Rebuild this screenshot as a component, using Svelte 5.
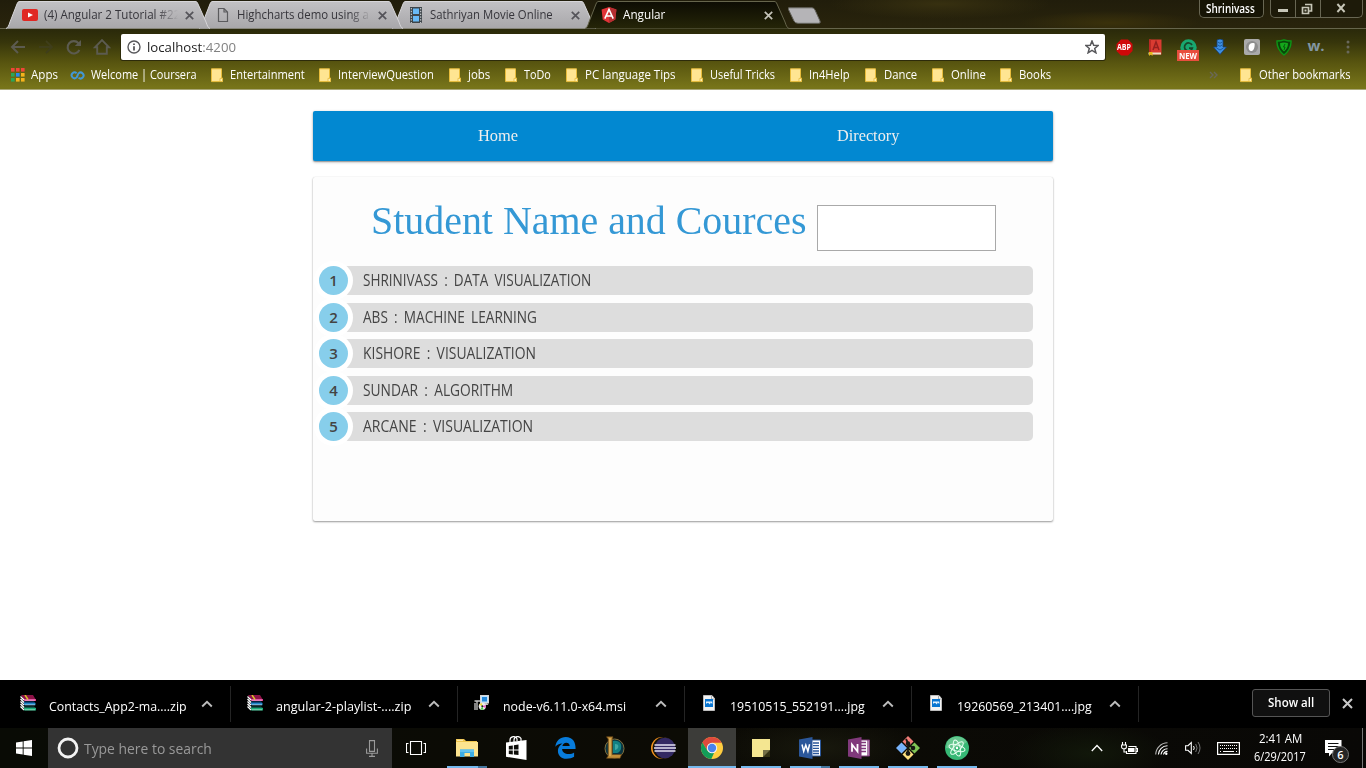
<script>
  const tabs = [
    { icon: 'youtube', title: '(4) Angular 2 Tutorial #22', width: 136, fade: true },
    { icon: 'page', title: 'Highcharts demo using a', width: 132, fade: true },
    { icon: 'film', title: 'Sathriyan Movie Online', width: 123 },
    { icon: 'angular', title: 'Angular', width: 42, active: true }
  ];

  const bookmarks = [
    { title: 'Entertainment', width: 75, cell: 108 },
    { title: 'InterviewQuestion', width: 96, cell: 130 },
    { title: 'jobs', width: 22, cell: 56 },
    { title: 'ToDo', width: 27, cell: 61 },
    { title: 'PC language Tips', width: 91, cell: 125 },
    { title: 'Useful Tricks', width: 65, cell: 99 },
    { title: 'In4Help', width: 41, cell: 75 },
    { title: 'Dance', width: 33, cell: 67 },
    { title: 'Online', width: 35, cell: 68 },
    { title: 'Books', width: 32, cell: 52 }
  ];

  const students = [
    { text: 'Shrinivass : Data Visualization', width: 228 },
    { text: 'Abs : Machine Learning', width: 174 },
    { text: 'Kishore : Visualization', width: 173 },
    { text: 'Sundar : Algorithm', width: 150 },
    { text: 'Arcane : Visualization', width: 170 }
  ];

  const downloads = [
    { icon: 'rar', name: 'Contacts_App2-ma....zip', width: 138 },
    { icon: 'rar', name: 'angular-2-playlist-....zip', width: 135 },
    { icon: 'msi', name: 'node-v6.11.0-x64.msi', width: 123 },
    { icon: 'jpg', name: '19510515_552191....jpg', width: 135 },
    { icon: 'jpg', name: '19260569_213401....jpg', width: 135 }
  ];

  const apps = [
    { icon: 'explorer', open: true, stacked: true },
    { icon: 'store' },
    { icon: 'edge' },
    { icon: 'league' },
    { icon: 'eclipse' },
    { icon: 'chrome', focused: true },
    { icon: 'notes', open: true },
    { icon: 'word', open: true, stacked: true },
    { icon: 'onenote', open: true },
    { icon: 'git', open: true },
    { icon: 'atom', open: true }
  ];

  // Condenses a run of text so that it fills exactly the given width.
  function fit(node, width) {
    const natural = node.offsetWidth;
    if (natural) node.style.transform = `scaleX(${width / natural})`;
  }
</script>

{#snippet label(text, width)}
  <span class="label" style="width:{width}px"><span class="run" use:fit={width}>{text}</span></span>
{/snippet}

{#snippet folder()}
  <svg class="folder" width="13" height="15" viewBox="0 0 13 15">
    <path d="M.5 .8H10.5V10H11.5V13.6H.5Z" fill="#ffe592" stroke="#e9bd3c" />
    <path d="M9 13.5V10.4H11.5V13.5Z" fill="#fff0b0" stroke="#e5b93a" stroke-width=".8" />
  </svg>
{/snippet}

{#snippet icon(name)}
  {#if name === 'youtube'}
    <svg width="16" height="16" viewBox="0 0 16 16"><rect x="0" y="2" width="16" height="12" rx="2" fill="#e02823" /><path d="M6 5.4L11 8L6 10.6Z" fill="#fff" /></svg>
  {:else if name === 'page'}
    <svg width="16" height="16" viewBox="0 0 16 16"><path d="M3.5 1.5H9L12.5 5V14.5H3.5ZM9 1.5V5H12.5" fill="none" stroke="#5b5b5e" stroke-width="1.2" /></svg>
  {:else if name === 'film'}
    <svg width="16" height="16" viewBox="0 0 16 16"><rect x="2" y="0" width="12" height="16" fill="#3f464b" /><path d="M5 1.5H11V7H5ZM5 9H11V14.5H5Z" fill="#69b9f5" /><path d="M3.3 1V16M12.7 1V16" stroke="#d8dde0" stroke-width="1" stroke-dasharray="1.4 1.4" /></svg>
  {:else if name === 'angular'}
    <svg width="16" height="16" viewBox="0 0 16 16"><path d="M8 0L15.4 2.6L14.3 12.4L8 16L1.7 12.4L.6 2.6Z" fill="#e23237" /><path d="M8 0L15.4 2.6L14.3 12.4L8 16Z" fill="#b52e31" /><path d="M3.8 11.7L8 2.5L12.2 11.7M5.5 9H10.5" fill="none" stroke="#fff" stroke-width="1.6" /></svg>
  {:else if name === 'rar'}
    <svg width="16" height="17" viewBox="0 0 16 17">
      <path d="M1 0H13L16 5H4Z" fill="#8d1247" /><path d="M4 4H16V6H4Z" fill="#db3f93" />
      <path d="M2 6.5H14L15.5 8H3Z" fill="#0b497f" /><path d="M4 8H15.5V10.2H4Z" fill="#2186c8" />
      <path d="M2 11.5H14L16 13H3Z" fill="#0c594c" /><path d="M4 13H16V15.5H4Z" fill="#1cad78" />
      <path d="M.5 1.5L4 5M.5 4L4 7.5M.5 6.5L4 10M.5 9L4 12.5M.5 11.5L4 15" stroke="#fff" stroke-width="1.3" />
      <path d="M5 0L8 4.5" stroke="#d9c32a" stroke-width="1.5" /><path d="M5 5.2H15M5 9.8H15M5 14.8H15" stroke="#fff" stroke-width=".5" />
    </svg>
  {:else if name === 'msi'}
    <svg width="16" height="17" viewBox="0 0 16 17">
      <rect x="6.5" y=".5" width="8" height="7.5" fill="#bfe3ff" stroke="#d5d5d5" /><rect x="8" y="2" width="5" height="4.5" fill="#2489db" /><path d="M9 10H14.5L13 8H10Z" fill="#c2c2c2" />
      <path d="M.5 6H6M3 6V15M1 8V15" stroke="#c9c9c9" stroke-width="1.3" /><circle cx="8.3" cy="11.3" r="3.6" fill="#ececec" /><path d="M8.3 11.3L11.7 10V13Z" fill="#ea53c7" /><path d="M8.3 11.3L6.4 14.4L9.5 14.7Z" fill="#49d445" /><path d="M8.3 11.3L5 9.4L8 8Z" fill="#f2dd3b" /><circle cx="8.3" cy="11.3" r="1" fill="#222" />
    </svg>
  {:else if name === 'jpg'}
    <svg width="16" height="17" viewBox="0 0 16 17"><path d="M2.5 .5H11L13.5 3.5V15.5H2.5Z" fill="#f3f3f3" stroke="#bdbdbd" /><path d="M10.5 .5V4H13.5" fill="#fff" stroke="#aaa" /><rect x="4" y="4" width="8" height="8" fill="#0875d1" /><path d="M5 6.4H11.3V9L9.6 7.6L9 9.5L7 7.7L5 8.7Z" fill="#e9f5ff" /></svg>
  {:else if name === 'explorer'}
    <svg width="22" height="18" viewBox="0 0 22 18"><path d="M0 0H8L10 2H21V17H0Z" fill="#f0c64e" /><path d="M0 3H22V17.5H0Z" fill="#fde48f" /><path d="M1 1.3H7" stroke="#fff1bd" /><path d="M4 18V10.5H18V18H14V14H8.5V18Z" fill="#3eaee5" /><path d="M4 10.5H18V13H4Z" fill="#62c3ef" /></svg>
  {:else if name === 'store'}
    <svg width="24" height="24" viewBox="0 0 24 24"><path d="M2 6.5L22.5 4V24L2 20.8Z" fill="#fff" /><path d="M6 7V4C6 .2 12-.6 13 2.8V5M10 6V4C10 .2 15.5-.6 17 2.6V5" fill="none" stroke="#fff" stroke-width="1.2" /><path d="M4.8 10L8.8 9.5V13.4H4.8ZM9.9 9.3L14.5 8.6V13.4H9.9ZM4.8 14.5H8.8V18.4L4.8 17.9ZM9.9 14.5H14.5V19.1L9.9 18.5Z" fill="#0c0c08" /></svg>
  {:else if name === 'edge'}
    <svg width="21" height="22" viewBox="0 0 21 22"><path d="M.3 9.7C1.3 3.6 5.2 0 10.8 0C17.5 0 20.8 4.9 20.6 12H7.1C7.3 15.4 10 17 13.5 17C15.8 17 17.8 16.3 19.1 15.4V19.8C17.4 21 14.6 21.8 11.6 21.8C6 21.8 2.9 18.3 2.9 13.7C2.9 10.8 4.5 8 7.4 6.4C4 6.6 1.8 7.7.3 9.7ZM7.4 9H14.7C14.5 6.8 13.3 5.8 11.3 5.8C9.2 5.8 7.8 7.1 7.4 9Z" fill="#087cdb" fill-rule="evenodd" /></svg>
  {:else if name === 'league'}
    <svg width="22" height="24" viewBox="0 0 22 24"><circle cx="11.5" cy="12.5" r="9.5" fill="#0a3440" stroke="#81703f" /><path d="M10 5C17 4 19 8 18 13C16 18 13 17 10 17Z" fill="#138083" /><path d="M12 8C17 8 16 13 12 14" fill="#3fa8a4" /><path d="M3.5 .8H10L9.2 3V18.5H18.5L17 22.3H3.5L5.2 20V3Z" fill="#c28f3a" stroke="#654518" stroke-width=".7" /><path d="M7 2V20" stroke="#e9c36b" /></svg>
  {:else if name === 'eclipse'}
    <svg width="25" height="22" viewBox="0 0 25 22"><circle cx="11" cy="11" r="11" fill="#f7941e" /><circle cx="12.6" cy="11" r="11" fill="#17130c" /><circle cx="14" cy="11" r="10.3" fill="#332963" /><path d="M3.5 8H24.5M3 11H25M3.5 14H24.5" stroke="#e5e1f2" stroke-width="1.5" /></svg>
  {:else if name === 'chrome'}
    <svg width="22" height="22" viewBox="0 0 22 22"><circle cx="11" cy="11" r="11" fill="#ffcd40" /><path d="M11 11L6.5 13.7L1.4 5.6A11 11 0 0 1 20.6 5.8H11Z" fill="#df4a3d" /><path d="M1.4 5.6L6.5 13.7L11 16H13L10.3 22A11 11 0 0 1 1.4 5.6Z" fill="#129d59" /><circle cx="11" cy="11" r="5.2" fill="#f3f3f3" /><circle cx="11" cy="11" r="4.2" fill="#4a82ed" /></svg>
  {:else if name === 'notes'}
    <svg width="18" height="18" viewBox="0 0 18 18"><path d="M0 0H18V11L11 18H0Z" fill="#f4e691" /><path d="M11 18V11H18Z" fill="#746f46" /><path d="M18 11V18H11Z" fill="#333114" /></svg>
  {:else if name === 'word' || name === 'onenote'}
    <svg width="23" height="22" viewBox="0 0 23 22"><path d="M11 3H21.5V19H11Z" fill="#fff" stroke={name === 'word' ? '#2b579a' : '#80397b'} /><path d={name === 'word' ? 'M14 6H20M14 8.7H20M14 11.3H20M14 14H20M14 16.5H20' : 'M13 5.5H18M13 8.5H18M13 11.5H18M13 14.5H18M20 3V19'} stroke={name === 'word' ? '#2b579a' : '#80397b'} stroke-width="1.3" /><path d="M0 2.5L13.5 0V22L0 19.5Z" fill={name === 'word' ? '#2b579a' : '#80397b'} />{#if name === 'word'}<path d="M3 7.5L4.7 14.3L6.8 8L8.9 14.3L10.6 7.3" fill="none" stroke="#fff" stroke-width="1.5" />{:else}<path d="M4 14.7V7.5L9.5 14.5V7" fill="none" stroke="#fff" stroke-width="1.8" />{/if}</svg>
  {:else if name === 'git'}
    <svg width="24" height="24" viewBox="0 0 24 24"><path d="M12 0L17.5 5.5L12 11L6.5 5.5Z" fill="#f17d78" /><path d="M5.5 6.5L11 12L5.5 17.5L0 12Z" fill="#78b4fc" /><path d="M18.5 6.5L24 12L18.5 17.5L13 12Z" fill="#80c355" /><path d="M12 13L17.5 18.5L12 24L6.5 18.5Z" fill="#fce080" /><path d="M10 3L12 7V18M12 8L17 12" fill="none" stroke="#171712" stroke-width="1.8" /><circle cx="12" cy="7.5" r="2.2" fill="#171712" /><circle cx="12" cy="17.5" r="2.4" fill="#171712" /><circle cx="17" cy="12" r="2.3" fill="#171712" /></svg>
  {:else if name === 'atom'}
    <svg width="24" height="24" viewBox="0 0 24 24"><circle cx="12" cy="12" r="12" fill="#36b875" /><path d="M2 6A12 12 0 0 1 22 6Q12 14 1 12Z" fill="#66c78f" /><g fill="none" stroke="#e8fff1" stroke-width="1"><ellipse cx="12" cy="12" rx="8.3" ry="3.2" transform="rotate(15 12 12)" /><ellipse cx="12" cy="12" rx="8.3" ry="3.2" transform="rotate(75 12 12)" /><ellipse cx="12" cy="12" rx="8.3" ry="3.2" transform="rotate(135 12 12)" /></g><circle cx="12" cy="12" r="1.2" fill="#fff" /></svg>
  {/if}
{/snippet}

<div class="screen">
  <header class="chrome">
    <div class="strip">
      <div class="tabs">
        {#each tabs as tab, i}
          <div class="tab" class:active={tab.active} style="z-index:{tab.active ? 9 : 5 - i}">
            <svg class="shape" width="206" height="29" viewBox="0 0 206 29">
              <defs>
                <linearGradient id="tab{i}" x2="0" y2="1">
                  <stop offset="0" stop-color={tab.active ? '#0d0c03' : '#c2c1c4'} />
                  <stop offset="1" stop-color={tab.active ? '#252508' : '#a8a7aa'} />
                </linearGradient>
              </defs>
              <path d="M0 28.5C2 28 3 25 4 22L11 4C12 2 12 1.5 14 1.5H189C191 1.5 191 2 192 4L200 22C201 25 202 28 204 28.5" fill="url(#tab{i})" stroke={tab.active ? '#66654c' : '#d7d6d9'} stroke-width="1" />
            </svg>
            <div class="tabbody">
              {@render icon(tab.icon)}
              <span class="tabtitle" class:fade={tab.fade}>{@render label(tab.title, tab.width)}</span>
              <svg class="close" width="9" height="9" viewBox="0 0 9 9"><path d="M.8 .8L8.2 8.2M8.2 .8L.8 8.2" stroke={tab.active ? '#c4c3b9' : '#55545a'} stroke-width="1.7" /></svg>
            </div>
          </div>
        {/each}
        <svg class="newtab" width="36" height="18" viewBox="0 0 36 18"><path d="M1.5 .8H25Q27 .8 28 3L33 14Q34 16.3 31.5 16.3H11Q8 16.3 7 14L1.5 2.5Z" fill="#b5b4b7" stroke="#65645e" /></svg>
      </div>
      <div class="profile">{@render label('Shrinivass', 49)}</div>
      <div class="controls">
        <span class="ctl min"><i></i></span>
        <span class="ctl max"><svg width="12" height="12" viewBox="0 0 12 12"><path d="M4 1.5H10.5V8H8M1.5 4.5H7.5V10.5H1.5Z" fill="none" stroke="#c7c6b8" stroke-width="1.7" /><rect x="3.5" y="6.5" width="2" height="2" fill="#c7c6b8" /></svg></span>
        <span class="ctl quit"><svg width="10" height="10" viewBox="0 0 10 10"><path d="M1.4 1L8.6 9M8.6 1L1.4 9" stroke="#c7c6b8" stroke-width="1.9" /></svg></span>
      </div>
    </div>

    <div class="toolbar">
      <div class="nav">
        <svg width="28" height="18" viewBox="0 0 28 18"><path d="M18 3L12 9L18 15M12 9H25" fill="none" stroke="#5c5b50" stroke-width="2" /></svg>
        <svg width="28" height="18" viewBox="0 0 28 18"><path d="M18 3L24 9L18 15M11 9H24" fill="none" stroke="#3f3e1b" stroke-width="1.8" /></svg>
        <svg width="28" height="18" viewBox="0 0 28 18"><path d="M23.4 12A6.2 6.2 0 1 1 22.5 5.2" fill="none" stroke="#5c5b50" stroke-width="2.1" /><path d="M25 2V8H18.8Z" fill="#5c5b50" /></svg>
        <svg width="28" height="18" viewBox="0 0 28 18"><path d="M13.2 9.3H11L18 2L25 9.3H22.8V15.7H13.2Z" fill="none" stroke="#5c5b50" stroke-width="1.9" /></svg>
      </div>
      <div class="omnibox">
        <svg width="14" height="14" viewBox="0 0 14 14"><circle cx="7" cy="7" r="6" fill="none" stroke="#58585b" stroke-width="1.4" /><path d="M7 6.2V10.4M7 3.4V5" stroke="#4e4e51" stroke-width="1.7" /></svg>
        <span class="label url"><span class="run" use:fit={89}>localhost<em>:4200</em></span></span>
        <svg class="star" width="14" height="14" viewBox="0 0 14 14"><path d="M7 1L8.7 5.2L13.2 5.5L9.7 8.4L10.9 12.8L7 10.4L3.1 12.8L4.3 8.4L.8 5.5L5.3 5.2Z" fill="none" stroke="#58585b" stroke-width="1.5" /></svg>
      </div>
      <div class="extensions">
        <span class="ext"><svg width="17" height="17" viewBox="0 0 17 17"><path d="M5 .5H12L16.5 5V12L12 16.5H5L.5 12V5Z" fill="#d00808" /></svg><b class="abp">{@render label('ABP', 14)}</b></span>
        <span class="ext book"><svg width="15" height="17" viewBox="0 0 15 17"><path d="M2 .5H14.5V15.5H2Z" fill="#da3b31" /><path d="M1.5 13.5H14V15.5H1.5Z" fill="#ece1c5" /><path d="M2 .5H4V13H2Z" fill="#b92a24" /><path d="M6 11L9 3L12 11M7 8.5H11" fill="none" stroke="#97201e" stroke-width="1.5" /><path d="M2 13H5.5V17L3.7 15.4L2 17Z" fill="#e7b91c" /></svg></span>
        <span class="ext"><svg width="17" height="17" viewBox="0 0 17 17"><circle cx="8.5" cy="8.5" r="8.2" fill="#18a770" /><path d="M12 6A4 4 0 1 0 12.3 9.2H9" fill="none" stroke="#17472a" stroke-width="1.7" /></svg><b class="new">{@render label('NEW', 18)}</b></span>
        <span class="ext"><svg width="14" height="16" viewBox="0 0 14 16"><path d="M4 1L7 0L10 1V8H13.5L7 15.5L.5 8H4Z" fill="#3d8fe0" stroke="#153f78" stroke-width=".8" /><path d="M4.8 3L7 4.3L9.2 3M4.8 6L7 7.3L9.2 6M3.5 9L7 11L10.5 9" fill="none" stroke="#1c5a9e" stroke-width="1" /></svg></span>
        <span class="ext"><svg width="16" height="16" viewBox="0 0 16 16"><rect width="16" height="16" rx="2" fill="#aaa" /><circle cx="8" cy="8" r="6" fill="#8d8d8d" /><path d="M4.6 8.6C4.5 4.6 8 3.4 10.6 4.4C11 8 9.6 12 7 12Q4.8 12 4.6 8.6Z" fill="#fff" /></svg></span>
        <span class="ext"><svg width="16" height="17" viewBox="0 0 16 17"><path d="M1 2Q5 2 8 .8Q11 2 15 2Q15.5 10 8 16Q.5 10 1 2Z" fill="#0a4508" stroke="#0c9516" stroke-width="1.4" /><path d="M4 4.2Q8 2.8 12 4.2Q12 9 8 12.5Q4 9 4 4.2Z" fill="#14a81b" /><path d="M9 5L7.5 8H9L8 11" fill="none" stroke="#05520a" stroke-width=".9" /></svg></span>
        <span class="ext w">w.</span>
        <span class="ext"><svg width="4" height="14" viewBox="0 0 4 14"><g fill="#69685c"><circle cx="2" cy="2" r="1.5" /><circle cx="2" cy="7" r="1.5" /><circle cx="2" cy="12" r="1.5" /></g></svg></span>
      </div>
    </div>

    <div class="bookmarks">
      <span class="mark" style="width:59px">
        <svg width="14" height="14" viewBox="0 0 14 14">
          {#each ['#f04539', '#f04539', '#f04539', '#2aa658', '#2a8bef', '#f6b31c', '#2aa658', '#f6b31c', '#f6b31c'] as color, n}
            <rect x={(n % 3) * 5} y={Math.floor(n / 3) * 5} width="3.6" height="3.6" fill={color} />
          {/each}
        </svg>
        {@render label('Apps', 27)}
      </span>
      <span class="mark" style="width:141px">
        <svg width="15" height="9" viewBox="0 0 15 9"><path d="M6.6 2.2A2.9 2.9 0 1 0 6.6 6.4C7.6 5.3 7.6 3.4 8.6 2.4A2.9 2.9 0 1 1 8.6 6.6" fill="none" stroke="#4298d7" stroke-width="2" /></svg>
        {@render label('Welcome | Coursera', 106)}
      </span>
      {#each bookmarks as mark}
        <span class="mark" style="width:{mark.cell}px">{@render folder()}{@render label(mark.title, mark.width)}</span>
      {/each}
      <span class="more"><svg width="9" height="8" viewBox="0 0 9 8"><path d="M1 1L4 4L1 7M5 1L8 4L5 7" fill="none" stroke="#6a6858" stroke-width="1.4" /></svg></span>
      <span class="mark other">{@render folder()}{@render label('Other bookmarks', 92)}</span>
    </div>
  </header>

  <main>
    <nav class="menu"><a href="#home">{@render label('Home', 40)}</a><a href="#directory">{@render label('Directory', 62)}</a></nav>
    <section class="card">
      <div class="heading">
        <h1>{@render label('Student Name and Cources', 435)}</h1>
        <input type="text" aria-label="Student" />
      </div>
      <ol>
        {#each students as student, i}
          <li><span class="bubble">{i + 1}</span><span class="entry">{@render label(student.text, student.width)}</span></li>
        {/each}
      </ol>
    </section>
  </main>

  <div class="shelf">
    {#each downloads as file}
      <div class="file">
        {@render icon(file.icon)}
        <span class="filename">{@render label(file.name, file.width)}</span>
        <svg class="chev" width="12" height="8" viewBox="0 0 12 8"><path d="M1.2 6.5L6 1.8L10.8 6.5" fill="none" stroke="#bdbdbd" stroke-width="1.9" /></svg>
      </div>
    {/each}
    <button>{@render label('Show all', 46)}</button>
    <svg class="dismiss" width="11" height="11" viewBox="0 0 11 11"><path d="M1 1L10 10M10 1L1 10" stroke="#c9c9c9" stroke-width="2" /></svg>
  </div>

  <footer class="taskbar">
    <span class="start"><svg width="16" height="16" viewBox="0 0 16 16"><path d="M0 2.4L6.7 1.4V7.5H0ZM7.6 1.2L16 0V7.5H7.6ZM0 8.5H6.7V14.6L0 13.6ZM7.6 8.5H16V16L7.6 14.8Z" fill="#fff" /></svg></span>
    <div class="search">
      <svg width="22" height="22" viewBox="0 0 22 22"><circle cx="11" cy="11" r="9" fill="none" stroke="#f3f3f3" stroke-width="2.8" /></svg>
      {@render label('Type here to search', 128)}
      <svg class="mic" width="12" height="17" viewBox="0 0 12 17"><path d="M3.5 .6H8.5V11.4H3.5ZM.6 8.5V13.3H11.4V8.5M6 13.5V16.4M3 16.4H9" fill="none" stroke="#9b9b9b" stroke-width="1.1" /></svg>
    </div>
    <span class="taskview"><svg width="20" height="14" viewBox="0 0 20 14"><path d="M4.5 .5H15.5V13.5H4.5ZM2.5 2.5H.5V11.5H2.5M17.5 2.5H19.5V11.5H17.5" fill="none" stroke="#fff" stroke-width="1.1" /></svg></span>
    <div class="apps">
      {#each apps as app}
        <span class="app" class:open={app.open} class:focused={app.focused} class:stacked={app.stacked}>{@render icon(app.icon)}</span>
      {/each}
    </div>
    <div class="tray">
      <span style="width:30px"><svg width="12" height="8" viewBox="0 0 12 8"><path d="M.8 7L6 1.5L11.2 7" fill="none" stroke="#fff" stroke-width="1.3" /></svg></span>
      <span style="width:34px"><svg width="17" height="13" viewBox="0 0 17 13"><path d="M7.5 4.5H15V11.5H5.5V9M15.5 6.5H16.5V9.5H15.5M.6 3H5.4V5C5.4 7.4.6 7.4.6 5ZM1.5 3V0M4.5 3V0M3 7V10H5" fill="none" stroke="#fff" stroke-width="1.1" /><path d="M7 6H13.5V10H7Z" fill="#fff" /></svg></span>
      <span style="width:31px"><svg width="13" height="13" viewBox="0 0 13 13"><g fill="none" stroke="#fff" stroke-width="1.1"><path d="M.7 12.5A12 12 0 0 1 12.5 .8" opacity=".7" /><path d="M3.4 12.5A9 9 0 0 1 12.5 3.8M6 12.5A6.5 6.5 0 0 1 12.5 6.8M8.5 12.5A4 4 0 0 1 12.5 9.4" /></g><circle cx="11.3" cy="11.8" r="1.2" fill="#fff" /></svg></span>
      <span style="width:31px"><svg width="16" height="14" viewBox="0 0 16 14"><path d="M.6 4.7H3L6.3 1.5V12.5L3 9.3H.6Z" fill="none" stroke="#fff" stroke-width="1.1" /><path d="M8.5 5Q10 7 8.5 9" fill="none" stroke="#fff" /><path d="M10.7 3Q13.4 7 10.7 11M13 1Q17 7 13 13" fill="none" stroke="#777" /></svg></span>
      <span style="width:40px"><svg width="23" height="13" viewBox="0 0 23 13"><rect x=".6" y=".6" width="21.8" height="11.8" fill="none" stroke="#fff" stroke-width="1.2" /><path d="M3 3.5H20M3 6.5H20" stroke="#fff" stroke-width="1" stroke-dasharray="1 1" /><path d="M3 9.5H4M6 9.5H17M19 9.5H20" stroke="#fff" stroke-width="1" /></svg></span>
      <div class="clock">{@render label('2:41 AM', 43)}{@render label('6/29/2017', 52)}</div>
      <span class="action"><svg width="17" height="17" viewBox="0 0 17 17"><path d="M0 0H16.5V13H7L4 16.5V13H0Z" fill="#fff" /><path d="M3 3.5H13.5M3 6.5H13.5M3 9.5H10" stroke="#111" /></svg><b>6</b></span>
    </div>
  </footer>
</div>

<style>
  :global(body) { overflow: hidden; }
  .screen { width: 1366px; height: 768px; display: flex; flex-direction: column; background: #fff; font: 12px/16px "Open Sans", "Noto Sans", sans-serif; box-sizing: border-box; }
  .screen * { box-sizing: border-box; }
  svg { display: block; flex: none; }
  .label { display: inline-block; white-space: nowrap; flex: none; }
  .run { display: inline-block; transform-origin: 0 50%; }

  .chrome { height: 90px; flex: none; display: flex; flex-direction: column; background: linear-gradient(#29280a 28px, #36350b 42px, #57540f 62px, #77741a 87px, #77741a); border-bottom: 1px solid #aaa87a; }
  .strip { height: 29px; display: flex; flex: none; background: radial-gradient(ellipse 90px 12px at 1110px 23px, #3a310b, transparent), radial-gradient(ellipse 110px 15px at 940px 4px, #373010, transparent), linear-gradient(#211d0b, #29240c); border-bottom: 1px solid #66654c; }
  .tabs { display: flex; padding-left: 6px; width: 1199px; height: 29px; }
  .tab { position: relative; width: 205px; height: 29px; margin-right: -12px; color: #36353b; flex: none; }
  .tab.active { color: #fff; font-weight: 500; }
  .shape { position: absolute; left: 0; top: 0; }
  .tabbody { position: relative; display: flex; align-items: center; height: 29px; padding: 1px 17px 0 16px; }
  .tabtitle { margin-left: 6px; width: 134px; overflow: hidden; display: flex; }
  .fade { mask-image: linear-gradient(90deg, #000 112px, transparent 134px); }
  .close { margin-left: auto; }
  .newtab { margin: 7px 0 0 9px; }
  .profile { width: 65px; height: 18px; padding: 0 0 0 6px; color: #fff; border: 1px solid #686653; border-top: 0; border-radius: 0 0 5px 5px; font-weight: 600; line-height: 17px; background: #161405; flex: none; }
  .controls { display: flex; margin-left: 6px; height: 18px; border: 1px solid #686653; border-top: 0; border-radius: 0 0 5px 5px; width: 93px; background: #1d1a09; flex: none; }
  .ctl { display: flex; justify-content: center; align-items: center; width: 25px; border-right: 1px solid #686653; }
  .ctl.max { padding-right: 2px; }
  .ctl.quit { width: 41px; border: 0; padding-right: 2px; padding-bottom: 1px; }
  .min i { width: 10px; height: 3px; background: #c7c6b8; margin: 4px 1px 0 0; }

  .toolbar { height: 33px; display: flex; align-items: center; flex: none; padding-top: 3px; }
  .nav { width: 121px; display: flex; flex: none; }
  .omnibox { width: 984px; height: 26px; background: #fff; border-radius: 2px; box-shadow: 0 0 0 1px #2d2b0a; display: flex; align-items: center; padding: 0 6px; flex: none; font-size: 13.5px; color: #222; }
  .url { margin-left: 6px; width: 89px; line-height: 20px; }
  em { font-style: normal; color: #818181; }
  .star { margin-left: auto; }
  .extensions { display: flex; padding-left: 3px; }
  .ext { width: 32px; height: 26px; position: relative; display: flex; align-items: center; justify-content: center; }
  .book { padding-right: 4px; }
  .abp { position: absolute; left: 9px; top: 7px; width: 14px; color: #fff; font: bold 8px/12px "Open Sans", sans-serif; }
  .new { position: absolute; left: 5px; top: 16px; width: 22px; height: 11px; padding-left: 2px; font: bold 9px/11px "Open Sans", sans-serif; color: #fff; background: #e84e3d; }
  .w { font: bold 15px/20px "Open Sans", sans-serif; color: #8296a2; padding-bottom: 4px; }

  .bookmarks { display: flex; height: 27px; align-items: center; color: #fff; font-size: 12px; font-weight: 500; padding: 0 0 1px 11px; }
  .mark { display: flex; align-items: center; gap: 6px; flex: none; }
  .more { margin-left: 157px; width: 31px; }

  main { flex: 1; padding: 21px 0 0 313px; font-family: "Liberation Serif", serif; }
  .menu { width: 740px; height: 50px; background: #0288d1; border-radius: 2px; box-shadow: 0 1px 3px #0005, 0 1px 1px #0003; display: flex; }
  .menu a { flex: 1; text-align: center; color: #eee; text-decoration: none; font-size: 16px; line-height: 50px; }
  .card { width: 740px; height: 344px; margin-top: 16px; background: #fdfdfd; border-radius: 2px; box-shadow: 0 1px 2px #0006, 0 0 1px #0002; padding: 23px 20px 0 6px; }
  .heading { height: 66px; display: flex; padding-left: 52px; }
  h1 { margin: 0; font-size: 41px; line-height: 40px; font-weight: 400; color: #3498d5; width: 446px; }
  input { width: 179px; height: 46px; margin: 5px 0 0; border: 1px solid #a9a9a9; border-radius: 0; background: #fff; }
  ol { list-style: none; margin: 0; padding: 0; display: flex; flex-direction: column; gap: 7.5px; }
  li { display: flex; height: 29px; background: #ddd; border-radius: 5px; font: 15.5px/29px "Open Sans", sans-serif; color: #444; }
  .bubble { width: 29px; height: 29px; border-radius: 50%; background: #87ceeb; box-shadow: 0 0 0 5px #fff; text-align: center; font-weight: 600; font-size: 15px; flex: none; }
  .entry { margin-left: 15px; text-transform: uppercase; word-spacing: 3px; }

  .shelf { height: 48px; background: #000; color: #fff; display: flex; align-items: center; flex: none; font-size: 13px; font-weight: 500; padding-left: 4px; }
  .file { width: 227px; height: 36px; border-right: 1px solid #242424; display: flex; padding: 9px 17px 0 16px; flex: none; }
  .filename { margin: 3px 0 0 13px; }
  .chev { margin: 5px 0 0 auto; }
  button { width: 78px; height: 28px; padding: 0; margin: -2px 0 0 113px; border: 1px solid #555; border-radius: 3px; background: #101010; color: #fff; font: 600 12px/22px "Open Sans", sans-serif; }
  .dismiss { margin: -2px 0 0 12px; }

  .taskbar { height: 40px; flex: none; display: flex; background: radial-gradient(ellipse 100px 30px at 820px 20px, #18180d, transparent), radial-gradient(ellipse 80px 30px at 1090px 25px, #11170a, transparent), linear-gradient(90deg, #090b05, #0c0b05 50%, #090806); color: #fff; }
  .start { width: 48px; display: flex; align-items: center; justify-content: center; }
  .search { width: 344px; background: #333; display: flex; align-items: center; padding: 0 14px 0 9px; color: #999; font-size: 14px; }
  .search .label { margin: 2px 0 0 5px; line-height: 20px; }
  .mic { margin-left: auto; }
  .taskview { width: 47px; display: flex; align-items: center; justify-content: center; }
  .apps { display: flex; width: 541px; padding-left: 4px; gap: 1px; }
  .app { width: 48px; height: 40px; flex: none; display: flex; align-items: center; justify-content: center; }
  .open { background: linear-gradient(#75b8ed, #75b8ed) center bottom / 40px 2px no-repeat; }
  .stacked { background: linear-gradient(90deg, #75b8ed 31px, #44769e 31px) center bottom / 40px 2px no-repeat; }
  .focused { background: linear-gradient(#75b8ed, #75b8ed) left bottom / 48px 2px no-repeat, #3c3c39; }
  .tray { display: flex; margin-left: 102px; width: 284px; }
  .tray > span { display: flex; align-items: center; justify-content: center; flex: none; }
  .clock { width: 65px; display: flex; flex-direction: column; align-items: center; justify-content: center; line-height: 18px; padding-right: 1px; }
  .tray .action { width: 50px; position: relative; border-right: 1px solid #777; justify-content: flex-start; padding-left: 12px; }
  .action b { position: absolute; left: 19px; top: 18px; width: 17px; height: 17px; border-radius: 50%; background: #252525; border: 1px solid #777; text-align: center; font: 600 11px/15px "Open Sans", sans-serif; }
</style>
